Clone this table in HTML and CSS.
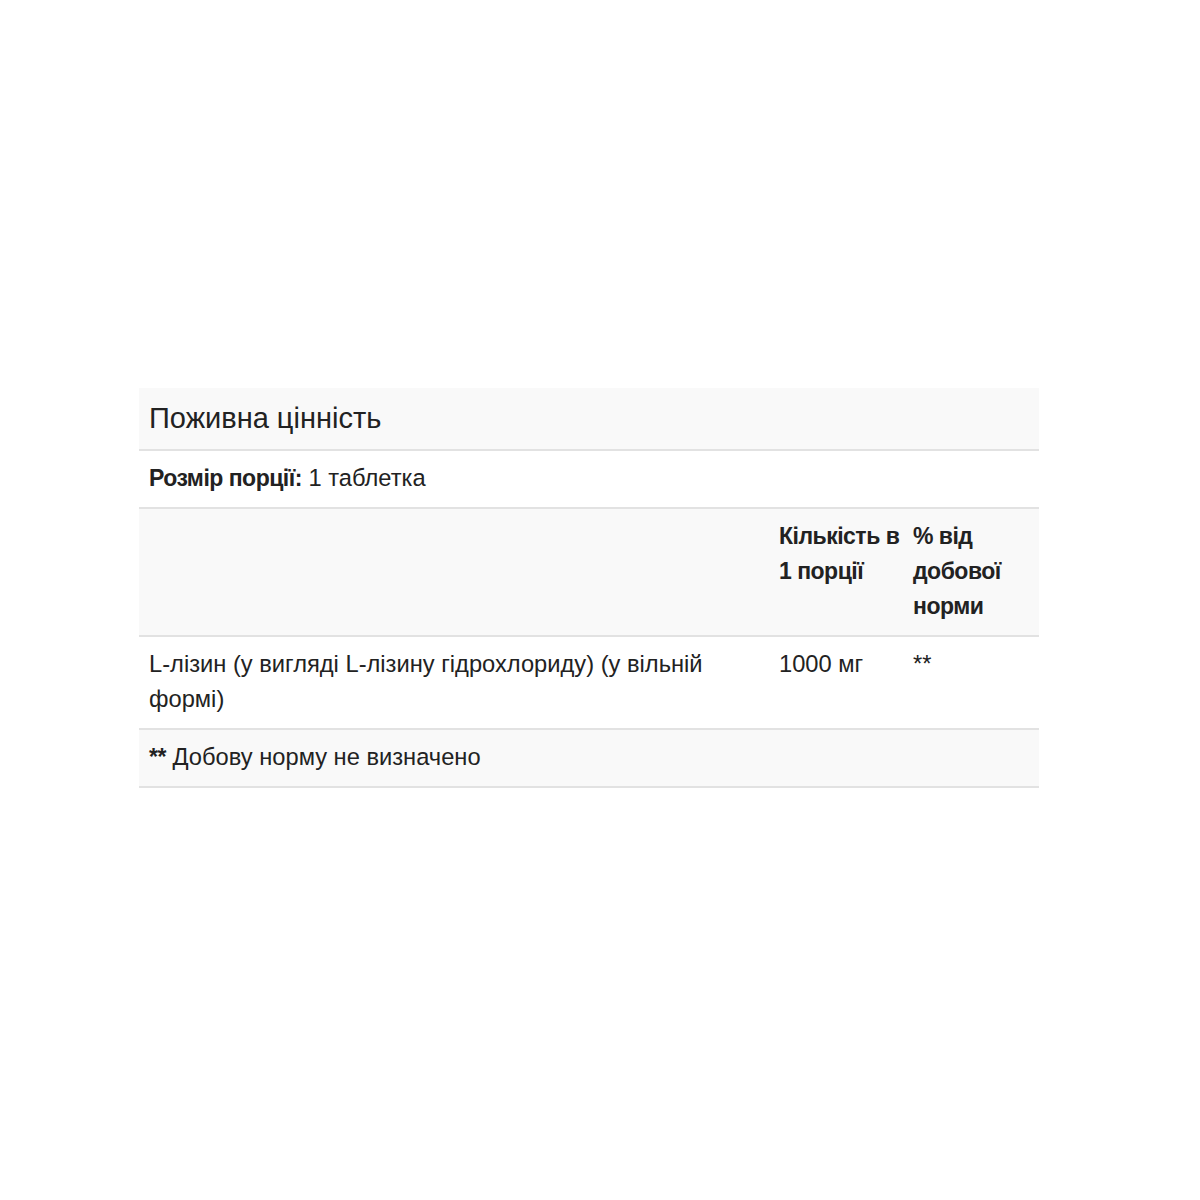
FILE: index.html
```html
<!DOCTYPE html>
<html lang="uk">
<head>
<meta charset="utf-8">
<link rel="stylesheet" href="styles.css">
</head>
<body>
<div class="wrap">
<table class="facts">
  <colgroup><col class="c1"><col class="c2"><col class="c3"></colgroup>
  <thead>
    <tr class="title-row"><th colspan="3">Поживна цінність</th></tr>
  </thead>
  <tbody>
    <tr class="serving"><td colspan="3"><b>Розмір порції:</b> 1 таблетка</td></tr>
    <tr class="head shaded"><td></td><td class="narrow"><b>Кількість в 1 порції</b></td><td class="narrow"><b>% від добової норми</b></td></tr>
    <tr><td>L-лізин (у вигляді L-лізину гідрохлориду) (у вільній формі)</td><td class="narrow">1000 мг</td><td class="narrow">**</td></tr>
    <tr class="shaded"><td colspan="3"><b>**</b> Добову норму не визначено</td></tr>
  </tbody>
</table>
</div>
</body>
</html>
```
FILE: styles.css
```css
html, body { margin: 0; padding: 0; background: #fff; }
body { font-family: "Liberation Sans", Arial, sans-serif; color: #222; }
.wrap { padding: 388px 0 0 139px; }
.facts { width: 900px; border-collapse: collapse; table-layout: fixed; }
.facts td, .facts th { text-align: left; vertical-align: top; font-size: 23.7px; line-height: 35px; padding: 10px 10px 11px; border-bottom: 2px solid #e2e2e2; }
.facts td.narrow { padding-right: 2px; }
.facts b { font-size: 23px; letter-spacing: -0.5px; }
.title-row th { background: #f9f9f9; font-size: 29px; font-weight: normal; line-height: 40px; }
.shaded td { background: #f9f9f9; }
.c1 { width: 630px; }
.c2 { width: 134px; }
.c3 { width: 136px; }
```
